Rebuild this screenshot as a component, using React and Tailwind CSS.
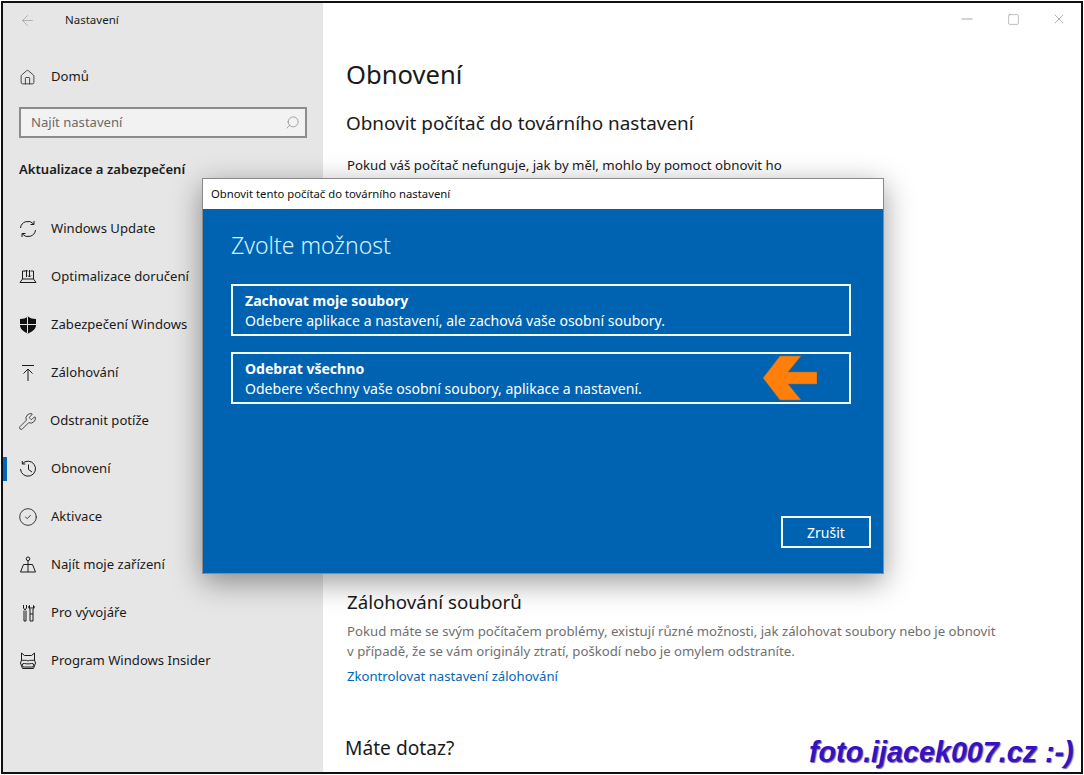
import { ArrowLeft, Minus, Square, X, Search, House, Wrench, CircleCheck } from "lucide-react";

const font = "font-['Noto_Sans',sans-serif]";

function Ico({ children }) {
  return (
    <svg viewBox="0 0 18 18" width="18" height="18" fill="none" stroke="#1a1a1a" strokeWidth="1" className="shrink-0">
      {children}
    </svg>
  );
}

const navItems = [
  {
    label: "Windows Update",
    icon: (
      <Ico>
        <path d="M1.500 8a7.500 7.500 0 0 1 13.300-3.800M16.500 10a7.500 7.500 0 0 1-13.300 3.800" />
        <path d="M15 1v3.500h-3.500M3 17v-3.500h3.500" />
      </Ico>
    ),
  },
  {
    label: "Optimalizace doručení",
    icon: (
      <Ico>
        <path d="M3.500 11V3h3M14.500 11V3h-3M1 14.500h16l-2.500-3.500h-11zM7.500 9V2M6 3.500 7.500 2 9 3.500M10.500 2v7M9 7.500 10.500 9 12 7.500" />
      </Ico>
    ),
  },
  {
    label: "Zabezpečení Windows",
    icon: (
      <svg viewBox="0 0 18 18" width="18" height="18" className="shrink-0">
        <path d="M9 .500c2 1.700 4.800 2.500 8 2.500v6c0 4-3.500 6.800-8 8.500C4.500 15.800 1 13 1 9V3c3.200 0 6-.800 8-2.500z" fill="#111" />
        <path d="M8.500 1v16M1 8.500h16" stroke="#e6e6e6" strokeWidth="1" />
      </svg>
    ),
  },
  {
    label: "Zálohování",
    icon: (
      <Ico>
        <path d="M3 1.500h12M9 17V5M4.500 9.500 9 5l4.500 4.500" />
      </Ico>
    ),
  },
  {
    label: "Odstranit potíže",
    icon: <Wrench size={19} strokeWidth={1} color="#1a1a1a" className="-mx-px shrink-0" />,
  },
  {
    label: "Obnovení",
    active: true,
    icon: (
      <Ico>
        <path d="M3.300 3.800A7.500 7.500 0 1 1 1.500 9M3.300 1v3h3M9.500 4.500v5l3.500 2.500" />
      </Ico>
    ),
  },
  {
    label: "Aktivace",
    icon: <CircleCheck size={20} strokeWidth={1} color="#1a1a1a" className="-mx-px shrink-0" />,
  },
  {
    label: "Najít moje zařízení",
    icon: (
      <Ico>
        <circle cx="9" cy="2.800" r="1.800" />
        <path d="M9 4.600V16M1.500 16h15l-3-7.500h-9z" />
      </Ico>
    ),
  },
  {
    label: "Pro vývojáře",
    icon: (
      <Ico>
        <path d="M4.500 1v3l1.500 2 1.500-2V1M5 6.500V17h2V6.500M10.500 1.500a2 2 0 0 0 .5 3.500v12h3V5a2 2 0 0 0 .5-3.500V4h-4zM11 10h3" />
      </Ico>
    ),
  },
  {
    label: "Program Windows Insider",
    icon: (
      <Ico>
        <path d="M2.500 1 5.500 3.500h7l3-2.500v7l1 3-2 5.500h-11l-2-5.500 1-3z" />
        <path d="M2.500 8c2 1 4.500-.500 6.500 1 2-1.500 4.500 0 6.500-1M5.500 11.500a1.800 1.800 0 1 0 0 3.500h7a1.800 1.800 0 1 0 0-3.500c-2 .500-5 .500-7 0z" />
      </Ico>
    ),
  },
];

function NavRow({ item }) {
  return (
    <div className="relative flex h-12 items-center gap-[14px] pl-4">
      {item.active && <div className="absolute left-0 top-[12px] h-6 w-1 bg-[#0067c0]" />}
      {item.icon}
      <span className="text-[13.100px] text-[#1a1a1a]">{item.label}</span>
    </div>
  );
}

function Option({ title, text, children }) {
  return (
    <div className="relative flex h-[52px] flex-col justify-center border-2 border-[#f2fbff] px-3 pt-px text-[14.050px] leading-5 text-white">
      <div className="font-bold">{title}</div>
      <div>{text}</div>
      {children}
    </div>
  );
}

export default function App() {
  return (
    <div className={`${font} relative h-[775px] w-[1084px] overflow-hidden bg-white p-px`}>
      <div className="flex h-[773px] w-[1082px] border-2 border-[#111]">
        {/* Sidebar */}
        <aside className="h-full w-[320px] shrink-0 bg-[#e6e6e6]">
          <div className="flex h-[34px] items-center pl-4">
            <ArrowLeft size={17} strokeWidth={1} color="#999" />
            <span className="ml-[29px] text-[11.500px] text-[#1a1a1a]">Nastavení</span>
          </div>
          <div className="mt-[16px] flex h-[48px] items-center gap-[15px] pl-4">
            <House size={17} strokeWidth={1.1} color="#1a1a1a" />
            <span className="text-[13.100px] text-[#1a1a1a]">Domů</span>
          </div>
          <div className="mx-4 mt-[6px] flex h-[31px] w-[288px] items-center justify-between border-2 border-[#8c8c8c] bg-[#f2f2f2] pl-[10px] pr-[5px]">
            <span className="text-[13.100px] text-[#6b6b6b]">Najít nastavení</span>
            <Search size={15} strokeWidth={1} color="#777" className="-scale-x-100" />
          </div>
          <div className="mt-[21px] h-[46px] pl-4 text-[13.100px] font-semibold leading-5 text-[#1a1a1a]">
            Aktualizace a zabezpečení
          </div>
          <nav>
            {navItems.map((item) => (
              <NavRow key={item.label} item={item} />
            ))}
          </nav>
        </aside>

        {/* Main */}
        <main className="flex-1 pl-[23px] text-[#1a1a1a]">
          <div className="flex h-[30px] items-center justify-end gap-[31px] pr-[14px] pt-[2px]">
            <Minus size={18} strokeWidth={1} color="#888" />
            <Square size={13} strokeWidth={1} color="#888" />
            <X size={16} strokeWidth={1} color="#888" />
          </div>
          <h1 className="mt-[24px] text-[25.600px] leading-9">Obnovení</h1>
          <h2 className="mt-[16px] text-[18.900px] leading-7">Obnovit počítač do továrního nastavení</h2>
          <p className="mt-[18px] pl-px text-[13.250px] leading-5">
            Pokud váš počítač nefunguje, jak by měl, mohlo by pomoct obnovit ho
          </p>
          <h2 className="mt-[413px] pl-px text-[18.700px] leading-7">Zálohování souborů</h2>
          <p className="mt-[6px] w-[654px] pl-px text-[13.200px] leading-[19.500px] text-[#6f6f6f]">
            Pokud máte se svým počítačem problémy, existují různé možnosti, jak zálohovat soubory nebo je obnovit v
            případě, že se vám originály ztratí, poškodí nebo je omylem odstraníte.
          </p>
          <a className="mt-[5px] block pl-px text-[13.150px] leading-5 text-[#0067b8]">
            Zkontrolovat nastavení zálohování
          </a>
          <h2 className="-ml-px mt-[48px] text-[19.200px] leading-7">Máte dotaz?</h2>
        </main>
      </div>

      {/* Dialog */}
      <div className="absolute left-[202px] top-[178px] flex h-[396px] w-[682px] flex-col border border-[#8a8a8a] bg-[#0063b1] shadow-[0_8px_28px_rgba(0,0,0,0.4)]">
        <div className="flex h-[30px] items-center bg-white pl-2 text-[11.300px] text-[#111]">
          Obnovit tento počítač do továrního nastavení
        </div>
        <div className="flex flex-1 flex-col pb-[25px] pl-[28px] pr-[12px]">
          <h3 className="mt-[20px] text-[23px] font-light leading-8 text-[#d4f3ff]">Zvolte možnost</h3>
          <div className="mt-[23px] flex w-[620px] flex-col gap-4">
            <Option title="Zachovat moje soubory" text="Odebere aplikace a nastavení, ale zachová vaše osobní soubory." />
            <Option title="Odebrat všechno" text="Odebere všechny vaše osobní soubory, aplikace a nastavení.">
              <svg viewBox="0 0 54 46" width="54" height="46" className="absolute left-[530px] top-[1px]">
                <path d="M0 23 17 1h21L25 17h29v12H25l13 16H17z" fill="#ff7f0a" stroke="#8a6a3a" strokeWidth="0.500" />
              </svg>
            </Option>
          </div>
          <button className="mt-auto h-8 w-[90px] self-end border-2 border-[#f2fbff] text-[14px] text-white">
            Zrušit
          </button>
        </div>
      </div>

      {/* Watermark */}
      <div className="absolute left-[809px] top-[736px] whitespace-nowrap text-[28.700px] font-bold italic leading-8 text-[#3512c4] [font-family:'Liberation_Sans',sans-serif] [text-shadow:1px_1px_1px_rgba(20,0,90,0.6)]">
        foto.ijacek007.cz :-)
      </div>
    </div>
  );
}
